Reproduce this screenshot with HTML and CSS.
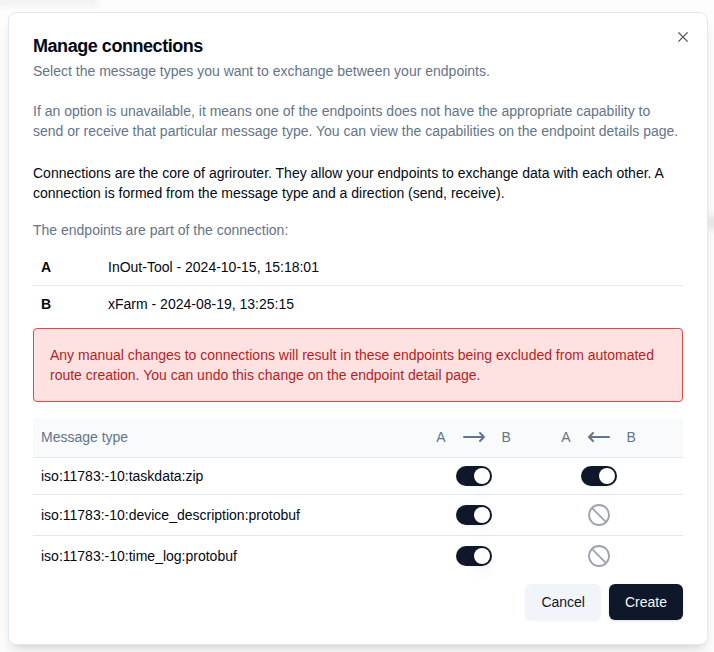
FILE: index.html
```html
<!DOCTYPE html>
<html lang="en">
<head>
<meta charset="utf-8">
<title>Manage connections</title>
<link rel="stylesheet" href="styles.css">
</head>
<body>
<div class="backdrop"><span class="smudge smudge-top"></span><span class="smudge smudge-right"></span></div>
<main class="dialog">
  <button class="close" aria-label="Close"><svg width="16" height="16" viewBox="0 0 16 16"><path d="M3.4 3.4 12.6 12.6M12.6 3.4 3.4 12.6"/></svg></button>
  <h1>Manage connections</h1>
  <p class="muted">Select the message types you want to exchange between your endpoints.</p>
  <p class="muted hint">If an option is unavailable, it means one of the endpoints does not have the appropriate capability to<br>send or receive that particular message type. You can view the capabilities on the endpoint details page.</p>
  <p class="about">Connections are the core of agrirouter. They allow your endpoints to exchange data with each other. A<br>connection is formed from the message type and a direction (send, receive).</p>
  <p class="muted parts">The endpoints are part of the connection:</p>
  <div class="endpoints">
    <div class="endpoint"><b>A</b><span>InOut-Tool - 2024-10-15, 15:18:01</span></div>
    <div class="endpoint"><b>B</b><span>xFarm - 2024-08-19, 13:25:15</span></div>
  </div>
  <div class="alert">Any manual changes to connections will result in these endpoints being excluded from automated route creation. You can undo this change on the endpoint detail page.</div>
  <div class="types">
    <div class="row head">
      <span>Message type</span>
      <span class="direction"><span>A</span><svg class="arrow" width="24" height="12" viewBox="0 0 24 12"><path d="M2 6H22M18 2l4 4-4 4"/></svg><span>B</span></span>
      <span class="direction"><span>A</span><svg class="arrow" width="24" height="12" viewBox="0 0 24 12"><path d="M22 6H2M6 2 2 6l4 4"/></svg><span>B</span></span>
    </div>
    <div class="row">
      <span>iso:11783:-10:taskdata:zip</span>
      <span class="switch"></span>
      <span class="switch"></span>
    </div>
    <div class="row tall">
      <span>iso:11783:-10:device_description:protobuf</span>
      <span class="switch"></span>
      <svg class="ban" width="24" height="24" viewBox="0 0 24 24"><circle cx="12" cy="12" r="10"/><path d="m4.93 4.93 14.14 14.14"/></svg>
    </div>
    <div class="row tall">
      <span>iso:11783:-10:time_log:protobuf</span>
      <span class="switch"></span>
      <svg class="ban" width="24" height="24" viewBox="0 0 24 24"><circle cx="12" cy="12" r="10"/><path d="m4.93 4.93 14.14 14.14"/></svg>
    </div>
  </div>
  <footer><button class="btn cancel">Cancel</button><button class="btn create">Create</button></footer>
</main>
</body>
</html>
```

FILE: styles.css
```css
* { box-sizing: border-box; }
body {
  margin: 0;
  height: 652px;
  overflow: hidden;
  padding: 12.4px 6px 0 8px;
  background: #fdfdfd;
  color: #020817;
  font: 14px/20px "Liberation Sans", Arial, sans-serif;
}
h1, p { margin: 0; }
button { font: inherit; border: 0; }
.backdrop { position: absolute; inset: 0; overflow: hidden; }
.smudge { position: absolute; background: #f1f1f1; filter: blur(3px); }
.smudge-top { left: -4px; top: -3px; width: 102px; height: 9px; }
.smudge-right { left: 708px; top: 216px; width: 12px; height: 13px; background: #e6e6e6; }
.dialog {
  position: relative;
  width: 700px;
  height: 632.4px;
  padding: 24px;
  background: #fff;
  border: 1px solid #e2e8f0;
  border-radius: 8px;
  box-shadow: 0 10px 15px -3px rgba(0, 0, 0, .1), 0 4px 6px -4px rgba(0, 0, 0, .1);
}
.close {
  position: absolute;
  top: 16px;
  right: 16px;
  width: 16px;
  height: 16px;
  padding: 0;
  background: none;
}
.close svg { display: block; fill: none; stroke: #4b505c; stroke-width: 1.3; }
h1 {
  margin-bottom: 6px;
  font-size: 18px;
  line-height: 18px;
  font-weight: 600;
  letter-spacing: -.45px;
}
.muted { color: #64748b; }
.hint { margin-top: 20px; white-space: nowrap; }
.about { margin-top: 22px; white-space: nowrap; }
.parts { margin-top: 16.6px; }
.endpoints { margin-top: 9.5px; }
.endpoint {
  display: grid;
  grid-template-columns: 67px 1fr;
  height: 37px;
  padding: 8px;
  border-bottom: 1px solid #e2e8f0;
}
.endpoint:last-child { border-bottom: 0; }
.alert {
  margin-top: 4.5px;
  padding: 16px;
  color: #b91c1c;
  background: #fee2e2;
  border: 1px solid #ef4444;
  border-radius: 4px;
}
.types { margin-top: 16px; }
.row {
  display: grid;
  grid-template-columns: 370px 125px 125px;
  align-items: center;
  justify-items: center;
  height: 37px;
  padding-left: 8px;
  border-bottom: 1px solid #e2e8f0;
}
.row > :first-child { justify-self: start; }
.head { height: 40px; color: #64748b; background: #f8fafc; }
.tall { height: 41px; }
.row:last-child { border-bottom: 0; height: 40px; }
.direction { display: flex; align-items: center; gap: 16px; }
.arrow { fill: none; stroke: #64748b; stroke-width: 2; stroke-linecap: round; stroke-linejoin: round; }
.ban { fill: none; stroke: #9ca3af; stroke-width: 1.8; }
.switch {
  width: 36px;
  height: 20px;
  padding: 2px;
  border-radius: 10px;
  background: #0f172a;
  box-shadow: 0 1px 2px rgba(0, 0, 0, .05);
}
.switch::before {
  content: "";
  display: block;
  width: 16px;
  height: 16px;
  margin-left: 16px;
  border-radius: 50%;
  background: #fff;
  box-shadow: 0 10px 15px -3px rgba(0, 0, 0, .1), 0 4px 6px -4px rgba(0, 0, 0, .1);
}
footer { display: flex; justify-content: flex-end; gap: 8px; margin-top: 8px; }
.btn { height: 36px; padding: 0 16px; border-radius: 6px; }
.cancel { background: #f1f5f9; color: #0f172a; box-shadow: 0 1px 2px rgba(0, 0, 0, .05); }
.create { background: #0f172a; color: #f8fafc; box-shadow: 0 1px 3px rgba(0, 0, 0, .1), 0 1px 2px -1px rgba(0, 0, 0, .1); }
```
